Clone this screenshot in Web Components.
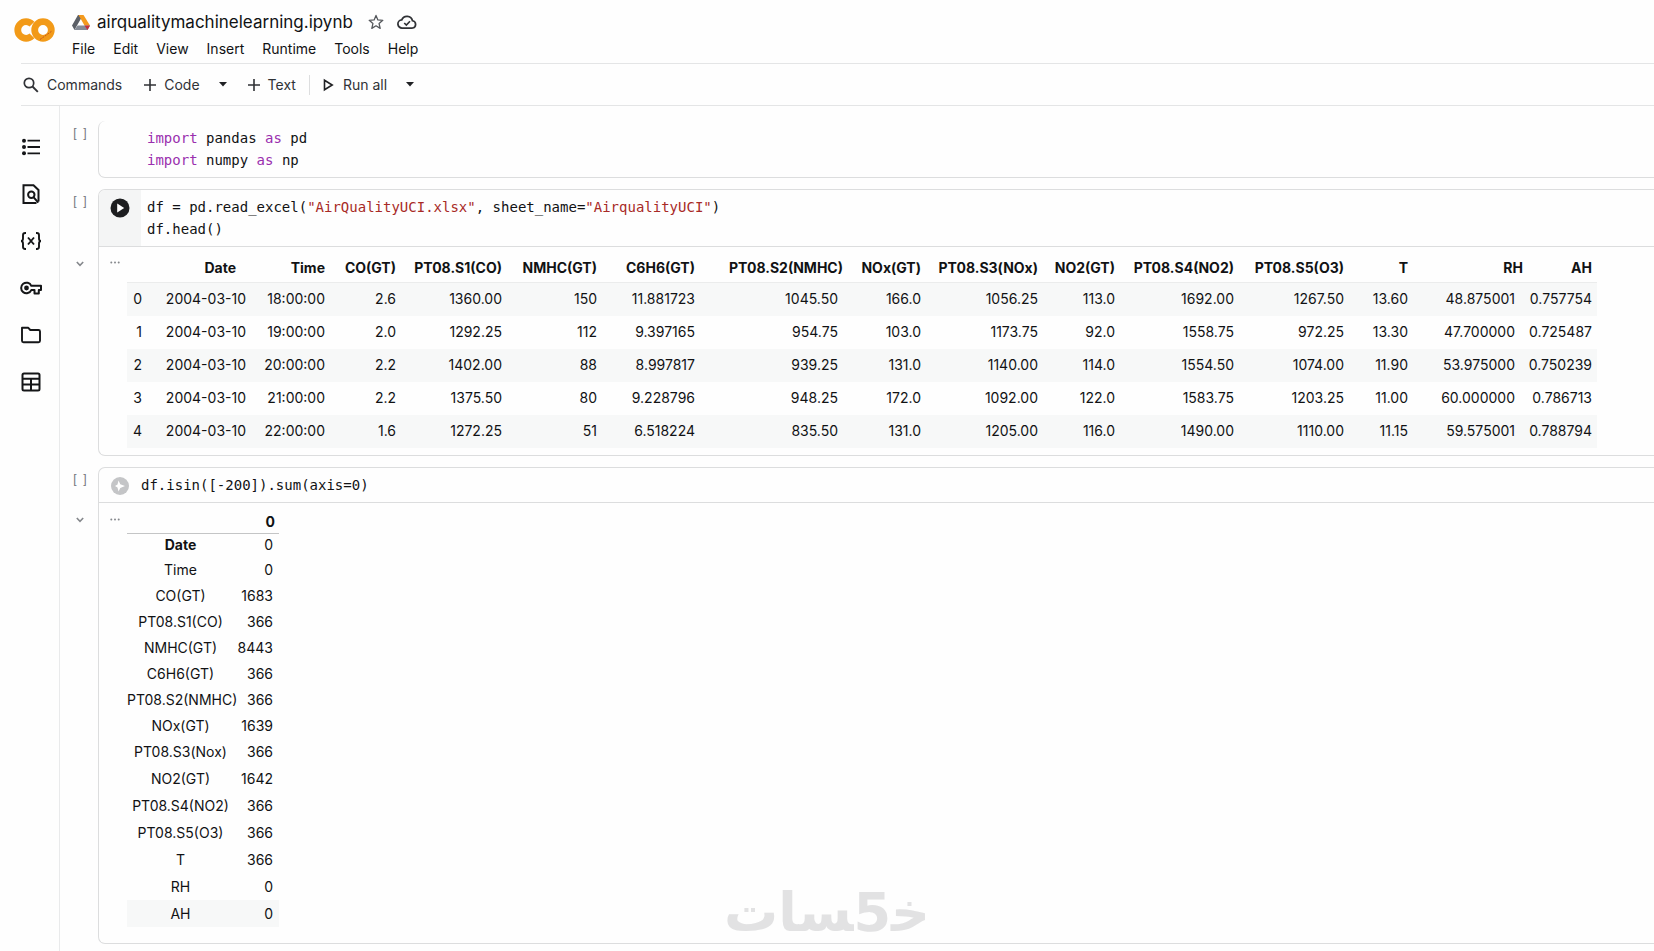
<!DOCTYPE html>
<html lang="en">
<head>
<meta charset="utf-8">
<title>airqualitymachinelearning.ipynb</title>
<style>
  body {
    margin: 0;
    background: #fefefe;
    color: #111214;
    font-family: Inter, Roboto, sans-serif;
    font-size: 14px;
  }
</style>
</head>
<body>
<notebook-app>
  <notebook-header slot="header" name="airqualitymachinelearning.ipynb"></notebook-header>
  <notebook-toolbar slot="toolbar"></notebook-toolbar>
  <side-rail slot="rail"></side-rail>

  <code-cell class="scrolled">
    <code-line><code-token kind="keyword">import</code-token> pandas <code-token kind="keyword">as</code-token> pd</code-line>
    <code-line><code-token kind="keyword">import</code-token> numpy <code-token kind="keyword">as</code-token> np</code-line>
  </code-cell>

  <code-cell run="active">
    <code-line>df = pd.read_excel(<code-token kind="string">"AirQualityUCI.xlsx"</code-token>, sheet_name=<code-token kind="string">"AirqualityUCI"</code-token>)</code-line>
    <code-line>df.head()</code-line>
    <data-frame slot="output"></data-frame>
  </code-cell>

  <code-cell run="idle">
    <code-line>df.isin([-200]).sum(axis=0)</code-line>
    <data-series slot="output"></data-series>
  </code-cell>

  <site-watermark slot="watermark"></site-watermark>
</notebook-app>

<script>
const icons = {
  drive: `<svg width="18" height="17" viewBox="0 0 18 17"><path d="M6 1h5L5 11.500 2.500 16 0 11.500z" fill="#5b5f66"/><path d="M6.500 1H11.500L18 11.500h-5.500z" fill="#f39a1e"/><path d="M5.500 11.500H18L15.500 16H2.500z" fill="#858b96"/><path d="M12.500 11.500H18L15.500 16z" fill="#c62f3b"/></svg>`,
  star: `<svg width="18" height="18" viewBox="0 0 24 24"><path d="M12 3.200l2.500 6.100 6.600.5-5 4.300 1.500 6.400-5.600-3.400-5.600 3.400 1.500-6.400-5-4.300 6.600-.5z" fill="none" stroke="#55585c" stroke-width="1.700" stroke-linejoin="round"/></svg>`,
  cloud: `<svg width="20" height="20" viewBox="0 0 24 24"><path d="M18.500 19.200H6.300a4.900 4.900 0 0 1-.6-9.800 6.800 6.800 0 0 1 12.900 1.100 4.400 4.400 0 0 1-.1 8.700z" fill="none" stroke="#303236" stroke-width="2.100"/><path d="M8.700 13.200l2.500 2.400 4.400-4.500" fill="none" stroke="#303236" stroke-width="2"/></svg>`,
  search: `<svg width="16" height="16" viewBox="0 0 16 16"><circle cx="6" cy="6" r="4.700" fill="none" stroke="#303236" stroke-width="1.700"/><path d="M9.500 9.500l5.300 5.300" stroke="#303236" stroke-width="1.900"/></svg>`,
  plus: `<svg width="12" height="12" viewBox="0 0 12 12"><path d="M6 0v12M0 6h12" stroke="#303236" stroke-width="1.600"/></svg>`,
  caret: `<svg width="10" height="5" viewBox="0 0 10 5"><path d="M1 0h8L5 4.500z" fill="#202124"/></svg>`,
  play: `<svg width="12" height="14" viewBox="0 0 12 14"><path d="M1.500 2.300v9.400L9.200 7z" fill="none" stroke="#202124" stroke-width="1.600"/></svg>`,
  toc: `<svg width="24" height="24" viewBox="0 0 24 24"><g fill="#151618"><circle cx="5" cy="5.700" r="2"/><circle cx="5" cy="12" r="2"/><circle cx="5" cy="18.300" r="2"/><path d="M8.500 4.800H21v1.800H8.500zM8.500 11.100H21v1.800H8.500zM8.500 17.400H21v1.800H8.500z"/></g></svg>`,
  find: `<svg width="24" height="24" viewBox="0 0 24 24" fill="none" stroke="#151618" stroke-width="2"><path d="M17.500 21H4.500V3.200h10L19.500 8v11.500"/><circle cx="12.300" cy="12.800" r="3.200"/><path d="M14.500 15.200l4.800 5.500"/></svg>`,
  vars: `<svg width="24" height="24" viewBox="0 0 24 24" fill="none" stroke="#151618" stroke-width="1.900"><path d="M7 4H6.200C4.800 4 4 4.800 4 6.200v3C4 11 3.400 12 2 12c1.400 0 2 1 2 2.800v3C4 19.200 4.800 20 6.200 20H7M17 4h.8C19.200 4 20 4.800 20 6.200v3c0 1.800.6 2.800 2 2.800-1.400 0-2 1-2 2.800v3c0 1.400-.8 2.200-2.200 2.200H17M9 8.500l6 7M15 8.500l-6 7"/></svg>`,
  key: `<svg width="24" height="24" viewBox="0 0 24 24" fill="none" stroke="#151618" stroke-width="2" stroke-linejoin="round"><path d="M12.300 9.800H22v4.300h-2.200v3.400h-4.300v-3.400h-3.200a5.300 5.300 0 1 1 0-4.300z"/><circle cx="7.500" cy="12" r="1.400" fill="#151618"/></svg>`,
  folder: `<svg width="24" height="24" viewBox="0 0 24 24" fill="none" stroke="#151618" stroke-width="1.900" stroke-linejoin="round"><path d="M3 4.800h6.300l2 2.200h8.200q1.500 0 1.500 1.500v9.200q0 1.500-1.500 1.500h-15Q3 19.200 3 17.700z"/></svg>`,
  table: `<svg width="24" height="24" viewBox="0 0 24 24" fill="none" stroke="#151618" stroke-width="2"><rect x="3.500" y="3.500" width="17" height="17" rx="1.500"/><path d="M3.500 8.700h17M3.500 14.600h17M12 8.700v11.800"/></svg>`,
  chevron: `<svg width="8" height="6" viewBox="0 0 8 6"><path d="M0.800 1l3.200 3.300L7.200 1" fill="none" stroke="#85888c" stroke-width="1.600"/></svg>`,
  dots: `<svg width="10" height="3" viewBox="0 0 10 3" fill="#85888c"><circle cx="1.300" cy="1.500" r="1"/><circle cx="5" cy="1.500" r="1"/><circle cx="8.700" cy="1.500" r="1"/></svg>`,
  runActive: `<svg width="20" height="20" viewBox="0 0 20 20"><circle cx="10" cy="10" r="9.500" fill="#1d1e20"/><path d="M7.200 5.500v9l7-4.500z" fill="#fff"/></svg>`,
  runIdle: `<svg width="20" height="20" viewBox="0 0 20 20"><circle cx="10" cy="10" r="9" fill="#c4c5c7"/><path d="M8.500 4.500l1.800 3.700 4.700 1.900-4.700 1.800-1.800 3.600-1-4L5 10.100l2.500-1.600z" fill="#fff"/></svg>`
};

const resetButton = `
  button {
    display: flex;
    align-items: center;
    margin: 0;
    padding: 0;
    border: 0;
    background: none;
    color: inherit;
    font: inherit;
    cursor: pointer;
  }
  svg { display: block; flex: none; }
`;

class BaseElement extends HTMLElement {
  constructor() {
    super();
    this.attachShadow({ mode: "open" });
  }

  connectedCallback() {
    this.shadowRoot.innerHTML = `<style>${this.styles()}</style>${this.markup()}`;
  }
}

class NotebookApp extends BaseElement {
  styles() {
    return `
      :host { display: block; position: relative; }
      .body { display: flex; }
      main {
        flex: 1;
        min-width: 0;
        display: flex;
        flex-direction: column;
        gap: 11px;
        padding: 15px 0 7px;
        overflow: hidden;
        border-left: 1px solid #e9eaeb;
      }
    `;
  }

  markup() {
    return `
      <slot name="header"></slot>
      <slot name="toolbar"></slot>
      <div class="body">
        <slot name="rail"></slot>
        <main><slot></slot></main>
      </div>
      <slot name="watermark"></slot>
    `;
  }
}

class NotebookHeader extends BaseElement {
  styles() {
    return `
      ${resetButton}
      :host { display: flex; height: 63px; }
      .logo { margin: 18px 17px 0 14px; }
      .title { display: flex; align-items: center; height: 24px; margin-top: 10px; }
      h1 { margin: 0 14px 0 7px; font-size: 17px; font-weight: 400; line-height: 24px; }
      .title button + button { margin-left: 12px; }
      nav { display: flex; gap: 18px; margin-top: 5px; line-height: 20px; }
    `;
  }

  markup() {
    const menus = ["File", "Edit", "View", "Insert", "Runtime", "Tools", "Help"];
    return `
      <svg class="logo" width="41" height="24" viewBox="0 0 41 24" fill="none" stroke="#f29a18" stroke-width="6.800">
        <path d="M18 6.200A8.300 8.300 0 1 0 18 17.800"/>
        <circle cx="29" cy="12" r="8.300"/>
        <path d="M26 21.500L38 13" stroke="#c9571c" stroke-width="1" stroke-dasharray="2 1"/>
      </svg>
      <div>
        <div class="title">
          ${icons.drive}
          <h1>${this.getAttribute("name")}</h1>
          <button aria-label="Star">${icons.star}</button>
          <button aria-label="Saved">${icons.cloud}</button>
        </div>
        <nav>${menus.map((menu) => `<button>${menu}</button>`).join("")}</nav>
      </div>
    `;
  }
}

class NotebookToolbar extends BaseElement {
  styles() {
    return `
      ${resetButton}
      :host {
        display: flex;
        align-items: center;
        height: 41px;
        margin-left: 21px;
        padding-left: 2px;
        border: solid #e4e5e6;
        border-width: 1px 0;
        color: #303236;
      }
      button { gap: 8px; margin-right: 22px; }
      .caret { margin: 0 20px 0 -4px; }
      .divider { width: 1px; height: 20px; margin: 0 13px 0 -9px; background: #dddedf; }
    `;
  }

  markup() {
    return `
      <button>${icons.search}Commands</button>
      <button>${icons.plus}Code</button>
      <button class="caret" aria-label="More cell types">${icons.caret}</button>
      <button>${icons.plus}Text</button>
      <span class="divider"></span>
      <button>${icons.play}Run all</button>
      <button class="caret" aria-label="Run options">${icons.caret}</button>
    `;
  }
}

class SideRail extends BaseElement {
  styles() {
    return `
      ${resetButton}
      :host {
        display: flex;
        flex-direction: column;
        align-items: center;
        gap: 23px;
        width: 59px;
        padding-top: 29px;
        box-sizing: border-box;
      }
      button { margin-left: 3px; }
    `;
  }

  markup() {
    const items = [
      ["Table of contents", icons.toc],
      ["Find and replace", icons.find],
      ["Variables", icons.vars],
      ["Secrets", icons.key],
      ["Files", icons.folder],
      ["Data explorer", icons.table]
    ];
    return items
      .map(([label, icon]) => `<button aria-label="${label}">${icon}</button>`)
      .join("");
  }
}

class CodeCell extends BaseElement {
  styles() {
    return `
      ${resetButton}
      :host { display: grid; grid-template-columns: 38px minmax(0, 1fr); }
      .side { display: flex; flex-direction: column; align-items: center; padding-left: 2px; }
      .count { height: 24px; color: #74777b; font: 12px/24px "Liberation Sans", Arial, sans-serif; white-space: pre; }
      .toggle { margin-top: 48px; }
      :host([run="idle"]) .toggle { margin-top: 26px; }
      .frame { border: 1px solid #dcddde; border-right: 0; border-radius: 7px 0 0 7px; overflow: hidden; }
      :host(.scrolled) .frame { border-top: 0; }
      .editor { display: flex; }
      .gutter { width: 42px; padding: 8px 0 0 11px; box-sizing: border-box; }
      :host([run="active"]) .gutter { background: #f4f5f5; }
      .code { padding: 6px 0 6px 6px; }
      :host([run="idle"]) .code { padding-left: 0; }
      .output { display: flex; padding: 8px 0 7px; border-top: 1px solid #dcddde; }
      :host([run="idle"]) .output { padding: 9px 0 16px; }
      .more { align-items: flex-start; width: 28px; padding: 6px 0 0 11px; box-sizing: border-box; }
    `;
  }

  markup() {
    const run = this.getAttribute("run");
    const icon = run === "active" ? icons.runActive : icons.runIdle;
    return `
      <div class="side">
        <span class="count">[  ]</span>
        ${run ? `<button class="toggle" aria-label="Collapse output">${icons.chevron}</button>` : ""}
      </div>
      <div class="frame">
        <div class="editor">
          <div class="gutter">${run ? `<button aria-label="Run cell">${icon}</button>` : ""}</div>
          <div class="code"><slot></slot></div>
        </div>
        ${run ? `
        <div class="output">
          <button class="more" aria-label="Output actions">${icons.dots}</button>
          <slot name="output"></slot>
        </div>` : ""}
      </div>
    `;
  }
}

class CodeLine extends BaseElement {
  styles() {
    return `
      :host {
        display: block;
        font: 14px/22px "DejaVu Sans Mono", "Liberation Mono", monospace;
        white-space: pre;
      }
    `;
  }

  markup() {
    return `<slot></slot>`;
  }
}

class CodeToken extends BaseElement {
  styles() {
    return `
      :host { display: inline; }
      :host([kind="keyword"]) { color: #9a2fae; }
      :host([kind="string"]) { color: #a82a26; }
    `;
  }

  markup() {
    return `<slot></slot>`;
  }
}

class DataFrame extends BaseElement {
  columns() {
    return [
      ["", 20], ["Date", 104], ["Time", 79], ["CO(GT)", 71], ["PT08.S1(CO)", 106],
      ["NMHC(GT)", 95], ["C6H6(GT)", 98], ["PT08.S2(NMHC)", 148], ["NOx(GT)", 78],
      ["PT08.S3(NOx)", 117], ["NO2(GT)", 77], ["PT08.S4(NO2)", 119],
      ["PT08.S5(O3)", 110], ["T", 64], ["RH", 115], ["AH", 69]
    ];
  }

  rows() {
    return [
      ["2004-03-10", "18:00:00", "2.6", "1360.00", "150", "11.881723", "1045.50", "166.0", "1056.25", "113.0", "1692.00", "1267.50", "13.60", "48.875001", "0.757754"],
      ["2004-03-10", "19:00:00", "2.0", "1292.25", "112", "9.397165", "954.75", "103.0", "1173.75", "92.0", "1558.75", "972.25", "13.30", "47.700000", "0.725487"],
      ["2004-03-10", "20:00:00", "2.2", "1402.00", "88", "8.997817", "939.25", "131.0", "1140.00", "114.0", "1554.50", "1074.00", "11.90", "53.975000", "0.750239"],
      ["2004-03-10", "21:00:00", "2.2", "1375.50", "80", "9.228796", "948.25", "172.0", "1092.00", "122.0", "1583.75", "1203.25", "11.00", "60.000000", "0.786713"],
      ["2004-03-10", "22:00:00", "1.6", "1272.25", "51", "6.518224", "835.50", "131.0", "1205.00", "116.0", "1490.00", "1110.00", "11.15", "59.575001", "0.788794"]
    ];
  }

  styles() {
    return `
      :host { display: block; }
      table { table-layout: fixed; width: 1470px; border-collapse: collapse; line-height: 20px; }
      th, td { padding: 0 5px 0 0; text-align: right; white-space: nowrap; }
      thead th { height: 25px; padding-bottom: 2px; border-bottom: 1px solid #ebecec; font-weight: 700; }
      tbody th { font-weight: 400; }
      tbody tr { height: 33px; }
      tbody tr:nth-child(odd) { background: #f7f8f8; }
      thead th:nth-child(2) { padding-right: 15px; }
      td:nth-child(8) { padding-right: 10px; }
      td:nth-child(15) { padding-right: 13px; }
    `;
  }

  markup() {
    const columns = this.columns();
    return `
      <table>
        <colgroup>${columns.map(([, width]) => `<col style="width: ${width}px">`).join("")}</colgroup>
        <thead><tr>${columns.map(([name]) => `<th>${name}</th>`).join("")}</tr></thead>
        <tbody>
          ${this.rows().map((row, index) =>
            `<tr><th>${index}</th>${row.map((value) => `<td>${value}</td>`).join("")}</tr>`
          ).join("")}
        </tbody>
      </table>
    `;
  }
}

class DataSeries extends BaseElement {
  rows() {
    return [
      ["Date", 0], ["Time", 0], ["CO(GT)", 1683], ["PT08.S1(CO)", 366], ["NMHC(GT)", 8443],
      ["C6H6(GT)", 366], ["PT08.S2(NMHC)", 366], ["NOx(GT)", 1639], ["PT08.S3(Nox)", 366],
      ["NO2(GT)", 1642], ["PT08.S4(NO2)", 366], ["PT08.S5(O3)", 366], ["T", 366], ["RH", 0], ["AH", 0]
    ];
  }

  styles() {
    return `
      :host { display: block; }
      table { table-layout: fixed; width: 152px; border-collapse: collapse; line-height: 20px; }
      th, td { padding: 0; white-space: nowrap; }
      thead th { height: 21px; border-bottom: 1px solid #c4c5c6; font-weight: 700; }
      thead th:last-child { width: 41px; padding-right: 4px; text-align: right; }
      tbody th { font-weight: 400; text-align: center; }
      tbody tr:first-child th { font-weight: 700; }
      td { padding-right: 6px; text-align: right; }
      tbody tr { height: 26px; }
      tbody tr:first-child { height: 24px; }
      tbody tr:nth-child(n+10) { height: 27px; }
      tbody tr:last-child { background: #f7f8f8; }
    `;
  }

  markup() {
    return `
      <table>
        <thead><tr><th></th><th>0</th></tr></thead>
        <tbody>
          ${this.rows().map(([name, value]) => `<tr><th>${name}</th><td>${value}</td></tr>`).join("")}
        </tbody>
      </table>
    `;
  }
}

class SiteWatermark extends BaseElement {
  styles() {
    return `
      :host {
        position: absolute;
        right: 0;
        bottom: 6px;
        left: 0;
        color: #e2e2e3;
        font: bold 54px/64px "DejaVu Sans", sans-serif;
        text-align: center;
        pointer-events: none;
      }
    `;
  }

  markup() {
    return `<span lang="ar" dir="rtl">خ&zwj;5&zwj;سات</span>`;
  }
}

window.customElements.define("notebook-app", NotebookApp);
window.customElements.define("notebook-header", NotebookHeader);
window.customElements.define("notebook-toolbar", NotebookToolbar);
window.customElements.define("side-rail", SideRail);
window.customElements.define("code-cell", CodeCell);
window.customElements.define("code-line", CodeLine);
window.customElements.define("code-token", CodeToken);
window.customElements.define("data-frame", DataFrame);
window.customElements.define("data-series", DataSeries);
window.customElements.define("site-watermark", SiteWatermark);
</script>
</body>
</html>
